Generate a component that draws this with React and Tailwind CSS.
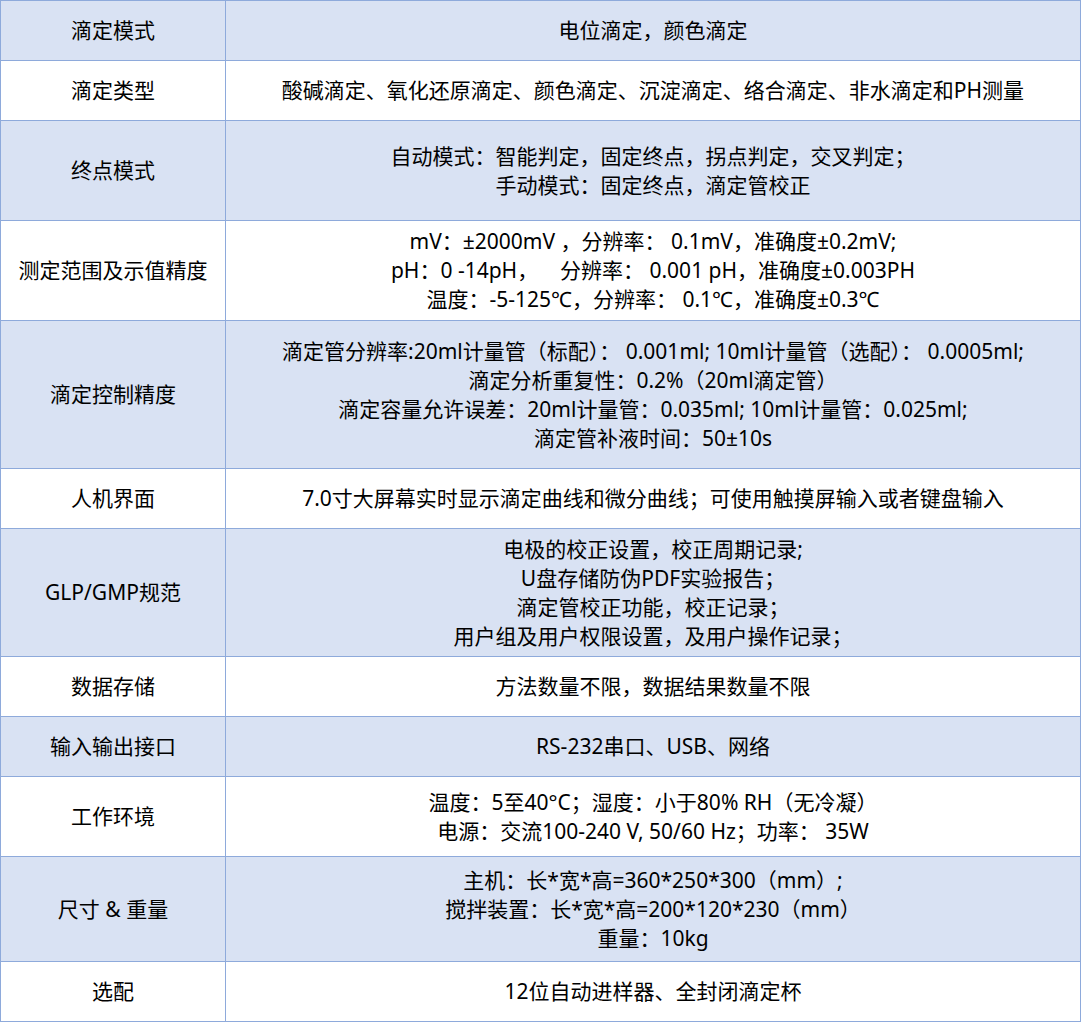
const rows = [
  { label: '滴定模式', h: 60, lines: ['电位滴定，颜色滴定'] },
  { label: '滴定类型', h: 60, lines: ['酸碱滴定、氧化还原滴定、颜色滴定、沉淀滴定、络合滴定、非水滴定和PH测量'] },
  { label: '终点模式', h: 100, lines: ['自动模式：智能判定，固定终点，拐点判定，交叉判定；', '手动模式：固定终点，滴定管校正'] },
  {
    label: '测定范围及示值精度',
    h: 100,
    lines: ['mV：±2000mV ，分辨率： 0.1mV，准确度±0.2mV;', 'pH：0 -14pH，    分辨率： 0.001 pH，准确度±0.003PH', '温度：-5-125℃，分辨率： 0.1℃，准确度±0.3℃'],
  },
  {
    label: '滴定控制精度',
    h: 148,
    lines: [
      '滴定管分辨率:20ml计量管（标配）： 0.001ml; 10ml计量管（选配）： 0.0005ml;',
      '滴定分析重复性：0.2%（20ml滴定管）',
      '滴定容量允许误差：20ml计量管：0.035ml; 10ml计量管：0.025ml;',
      '滴定管补液时间：50±10s',
    ],
  },
  { label: '人机界面', h: 60, lines: ['7.0寸大屏幕实时显示滴定曲线和微分曲线；可使用触摸屏输入或者键盘输入'] },
  {
    label: 'GLP/GMP规范',
    h: 128,
    lines: ['电极的校正设置，校正周期记录;', 'U盘存储防伪PDF实验报告；', '滴定管校正功能，校正记录；', '用户组及用户权限设置，及用户操作记录；'],
  },
  { label: '数据存储', h: 60, lines: ['方法数量不限，数据结果数量不限'] },
  { label: '输入输出接口', h: 60, lines: ['RS-232串口、USB、网络'] },
  { label: '工作环境', h: 80, lines: ['温度：5至40°C；湿度：小于80% RH（无冷凝）', '电源：交流100-240 V, 50/60 Hz；功率： 35W'] },
  {
    label: '尺寸 & 重量',
    h: 105,
    lines: ['主机：长*宽*高=360*250*300（mm）;', '搅拌装置：长*宽*高=200*120*230（mm）', '重量：10kg'],
  },
  { label: '选配', h: 60, lines: ['12位自动进样器、全封闭滴定杯'] },
]

export default function App() {
  return (
    <div
      className="w-[1081px] bg-white text-[21px] leading-[29px] text-black"
      style={{ fontFamily: '"Noto Sans", "Noto Sans CJK SC", sans-serif' }}
    >
      <table className="w-full table-fixed border-collapse">
        <colgroup>
          <col className="w-[225px]" />
          <col />
        </colgroup>
        <tbody>
          {rows.map((row, i) => (
            <tr key={row.label} className={i % 2 === 0 ? 'bg-[#d9e2f3]' : 'bg-white'} style={{ height: row.h }}>
              <td className="border border-[#8eaadb] px-1 text-center align-middle">{row.label}</td>
              <td className="border border-[#8eaadb] px-1 text-center align-middle">
                {row.lines.map((line) => (
                  <div key={line} className="whitespace-pre">
                    {line}
                  </div>
                ))}
              </td>
            </tr>
          ))}
        </tbody>
      </table>
    </div>
  )
}
